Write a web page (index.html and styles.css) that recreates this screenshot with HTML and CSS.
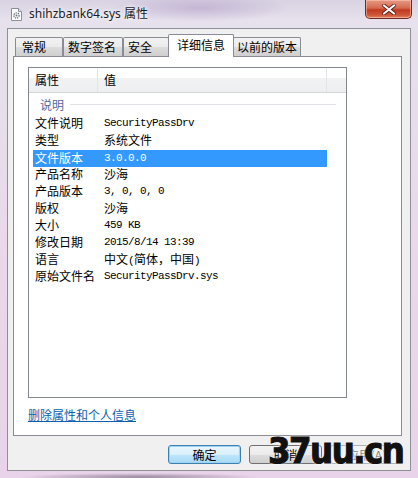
FILE: index.html
```html
<!DOCTYPE html>
<html>
<head>
<meta charset="utf-8">
<link rel="stylesheet" href="styles.css">
</head>
<body>

<div class="window">
  <div class="titlebar">
    <svg class="ico" width="11" height="13" viewBox="0 0 11 13">
      <path d="M0.5 0.5h7l3 3v9h-10z" fill="#fdfdfd" stroke="#8a8f99"/>
      <path d="M7.5 0.5v3h3" fill="#e4e6ea" stroke="#8a8f99"/>
      <circle cx="5.5" cy="7.5" r="2.6" fill="none" stroke="#6f7a86" stroke-width="1.4" stroke-dasharray="1.3 0.9"/>
      <circle cx="5.5" cy="7.5" r="1" fill="#6f7a86"/>
    </svg>
    <span class="title">shihzbank64.sys 属性</span>
    <div class="close">
      <svg width="14" height="11" viewBox="0 0 14 11">
        <path d="M2 1.5l10 8M12 1.5l-10 8" stroke="#5a1a10" stroke-width="3.6" stroke-linecap="round"/>
        <path d="M2 1.5l10 8M12 1.5l-10 8" stroke="#fff" stroke-width="2.2" stroke-linecap="round"/>
      </svg>
    </div>
  </div>

  <div class="client">
    <div class="tabs">
      <div class="tab tab-first">常规</div>
      <div class="tab">数字签名</div>
      <div class="tab">安全</div>
      <div class="tab active">详细信息</div>
      <div class="tab tab-last">以前的版本</div>
    </div>

    <div class="panel">
      <div class="list">
        <div class="list-head">
          <div class="hcol c1">属性</div>
          <div class="hcol c2">值</div>
          <div class="hcol c3"></div>
        </div>
        <div class="group"><span>说明</span><i></i></div>

        <div class="row"><span>文件说明</span><span class="mono">SecurityPassDrv</span></div>
        <div class="row"><span>类型</span><span>系统文件</span></div>
        <div class="row selected"><span>文件版本</span><span class="mono">3.0.0.0</span></div>
        <div class="row"><span>产品名称</span><span>沙海</span></div>
        <div class="row"><span>产品版本</span><span class="mono">3, 0, 0, 0</span></div>
        <div class="row"><span>版权</span><span>沙海</span></div>
        <div class="row"><span>大小</span><span class="mono">459 KB</span></div>
        <div class="row"><span>修改日期</span><span class="mono">2015/8/14 13:39</span></div>
        <div class="row"><span>语言</span><span>中文<b class="mono">(</b>简体，中国<b class="mono">)</b></span></div>
        <div class="row"><span>原始文件名</span><span class="mono">SecurityPassDrv.sys</span></div>
      </div>
      <a class="link" href="#">删除属性和个人信息</a>
    </div>

    <div class="buttons">
      <button class="btn default">确定</button>
      <button class="btn">取消</button>
      <button class="btn disabled">应用(A)</button>
    </div>
  </div>

  <div class="watermark">37uu.cn</div>
</div>

</body>
</html>
```

FILE: styles.css
```css
body {
    margin: 0;
    font-family: "Noto Sans CJK SC", sans-serif;
    font-size: 12px;
}

.window {
    position: relative;
    width: 418px;
    height: 478px;
    box-sizing: border-box;
    padding: 0 7px 7px 7px;
    overflow: hidden;
    background:
        radial-gradient(ellipse 90px 14px at 200px 8px, rgba(150,120,180,0.35), transparent),
        radial-gradient(ellipse 120px 4px at 140px 477px, rgba(60,50,70,0.45), transparent),
        linear-gradient(to bottom, #d8d2e2 0, #e6e1ec 20px, #ead7ea 60%, #e9d3ea 100%);
}

.titlebar {
    height: 28px;
    display: flex;
    align-items: flex-start;
}

.ico {
    margin: 8px 0 0 4px;
}

.title {
    margin: 6px 0 0 7px;
    font-family: "Noto Sans", "Noto Sans CJK SC", sans-serif;
    font-size: 12px;
    line-height: 16px;
    color: #1a1a1a;
    text-shadow: 0 0 6px #fff, 0 0 3px #fff;
}

.close {
    margin-left: auto;
    margin-right: -1px;
    width: 47px;
    height: 19px;
    box-sizing: border-box;
    border: 1px solid #6e2a20;
    border-top: none;
    border-radius: 0 0 5px 5px;
    background: linear-gradient(to bottom, #e59a84 0, #d46a4f 45%, #c0391f 55%, #cf5a3b 85%, #e4876b 100%);
    box-shadow: inset 0 0 0 1px rgba(255,210,190,0.5);
    display: flex;
    align-items: center;
    justify-content: center;
}

.client {
    height: 443px;
    box-sizing: border-box;
    border: 1px solid #8f9096;
    background: #f0f0f0;
    padding: 5px 8px 0 5px;
}

.tabs {
    display: flex;
    align-items: flex-end;
    height: 23px;
    margin: 0 0 -1px 2px;
    position: relative;
}

.tab {
    height: 19px;
    min-width: 46px;
    box-sizing: border-box;
    margin-bottom: 1px;
    padding: 0 6px 0 4px;
    border: 1px solid #898c95;
    border-bottom: none;
    border-radius: 2px 2px 0 0;
    background: linear-gradient(to bottom, #f2f2f2 0, #ebebeb 50%, #dddddd 51%, #cfcfcf 100%);
    line-height: 18px;
    color: #000;
}

.tab-first {
    min-width: 48px;
    padding-left: 6px;
}

.tab-last {
    padding: 0 3px 0 3px;
}

.tab.active {
    height: 23px;
    margin: 0 -1px;
    padding: 0 8px;
    background: #fff;
    line-height: 20px;
    position: relative;
    z-index: 1;
}

.panel {
    height: 380px;
    box-sizing: border-box;
    border: 1px solid #898c95;
    background: #fff;
    padding: 10px 0 0 14px;
}

.list {
    width: 319px;
    height: 331px;
    box-sizing: border-box;
    border: 1px solid #828790;
}

.list-head {
    display: flex;
    height: 25px;
    box-sizing: border-box;
    border-bottom: 1px solid #d5d5d5;
    background: linear-gradient(to bottom, #ffffff 0, #ffffff 40%, #f2f2f3 41%, #eeeff1 100%);
}

.hcol {
    line-height: 24px;
    padding-left: 6px;
    box-sizing: border-box;
    border-right: 1px solid #e3e4e7;
}

.c1 { width: 69px; }
.c2 { width: 229px; }
.c3 { flex: 1; border-right: none; }

.group {
    display: flex;
    align-items: center;
    height: 22px;
    padding: 0 10px 0 11px;
    color: #56679b;
}

.group i {
    flex: 1;
    height: 1px;
    margin-left: 6px;
    background: #e2e3e9;
}

.row {
    display: flex;
    height: 17px;
    width: 294px;
    margin-left: 4px;
    line-height: 16px;
    color: #000;
}

.row span:first-child {
    width: 69px;
    padding-left: 2px;
    box-sizing: border-box;
}

.row span + span {
    padding-left: 2px;
}

.row.selected {
    margin-top: 1px;
    margin-bottom: -1px;
    background: #3399ff;
    color: #fff;
}

.mono {
    font-family: "Liberation Mono", monospace;
    font-size: 11px;
    letter-spacing: -0.6px;
    font-weight: normal;
}

.link {
    display: inline-block;
    margin-top: 9px;
    color: #0b5fae;
    text-decoration: underline;
    line-height: 16px;
}

.buttons {
    display: flex;
    justify-content: flex-end;
    gap: 8px;
    margin: 9px -1px 0 0;
}

.btn {
    width: 73px;
    height: 19px;
    padding: 0;
    font-family: "Noto Sans CJK SC", sans-serif;
    font-size: 12px;
    line-height: 16px;
    border: 1px solid #707070;
    border-radius: 3px;
    background: linear-gradient(to bottom, #f2f2f2 0, #ebebeb 50%, #dddddd 51%, #cfcfcf 100%);
    color: #000;
}

.btn.default {
    border-color: #3c7fb1;
    background: linear-gradient(to bottom, #eaf6fd 0, #d9f0fc 50%, #bee6fd 51%, #a7d9f5 100%);
    box-shadow: inset 0 0 0 1px #9fd3ef;
}

.btn.disabled {
    border-color: #adb2b5;
    background: #f4f4f4;
    color: #838383;
}

.watermark {
    position: absolute;
    left: 268px;
    top: 433px;
    font-family: "DejaVu Sans Condensed", "DejaVu Sans", sans-serif;
    font-weight: bold;
    font-size: 36px;
    line-height: 36px;
    letter-spacing: -1.5px;
    color: #111;
    -webkit-text-stroke: 1px #111;
    text-shadow: 0 0 2px #fff, 0 0 3px #fff;
}
```
